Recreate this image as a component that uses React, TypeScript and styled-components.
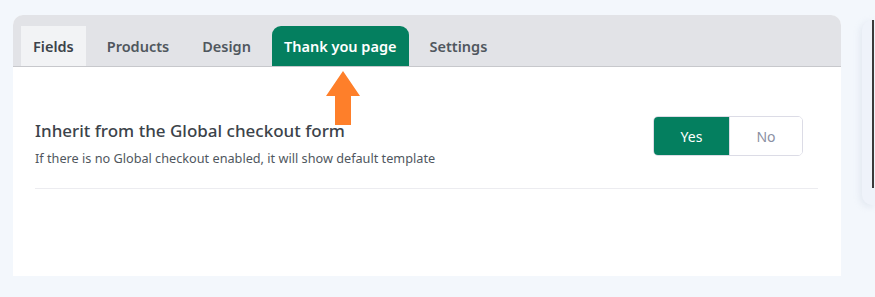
import React, { useState } from 'react';
import styled, { createGlobalStyle } from 'styled-components';

const GlobalStyle = createGlobalStyle`
  body {
    margin: 0;
    background: #f3f7fc;
    font-family: "Noto Sans", "Open Sans", Arial, sans-serif;
  }
`;

const Page = styled.div`
  display: flex;
  align-items: flex-start;
  height: 297px;
  overflow: hidden;
`;

const Card = styled.div`
  flex-shrink: 0;
  margin: 15px 0 0 13px;
  width: 828px;
  height: 261px;
  background: #ffffff;
  border-radius: 10px 10px 0 0;
  overflow: hidden;
`;

const TabBar = styled.div`
  display: flex;
  gap: 9px;
  padding: 11px 0 0 8px;
  background: #e2e3e7;
  border-bottom: 1px solid #c7c8cc;
`;

const Tab = styled.div<{ $active?: boolean; $current?: boolean }>`
  height: 40px;
  padding: 0 12px;
  display: flex;
  align-items: center;
  font-size: 14.5px;
  font-weight: 600;
  border-radius: ${p => (p.$active ? '9px 9px 0 0' : '0')};
  background: ${p => (p.$active ? '#047f5f' : p.$current ? '#f2f3f5' : 'transparent')};
  color: ${p => (p.$active ? '#ffffff' : p.$current ? '#3c434a' : '#50575e')};
  cursor: pointer;
`;

const Body = styled.div`
  position: relative;
  padding: 49px 23px 0 22px;
`;

const Arrow = styled.svg`
  position: absolute;
  left: 312px;
  top: 4px;
`;

const Row = styled.div`
  display: flex;
  justify-content: space-between;
  align-items: flex-start;
  padding-bottom: 21px;
  border-bottom: 1px solid #ececf0;
`;

const Label = styled.div`
  padding-top: 3px;
`;

const Title = styled.div`
  font-size: 17px;
  font-weight: 500;
  color: #3c434a;
  line-height: 24px;
`;

const Hint = styled.div`
  margin-top: 6px;
  font-size: 12.7px;
  color: #50575e;
  line-height: 18px;
`;

const Toggle = styled.div`
  display: flex;
  margin-right: 15px;
  border: 1px solid #dcdce6;
  border-radius: 5px;
  overflow: hidden;
`;

const ToggleBtn = styled.button<{ $on?: boolean }>`
  width: ${p => (p.$on ? '75px' : '73px')};
  height: 38px;
  border: none;
  font-family: inherit;
  font-size: 14px;
  background: ${p => (p.$on ? '#047f5f' : '#ffffff')};
  color: ${p => (p.$on ? '#ffffff' : '#8a8fa3')};
  border-left: ${p => (p.$on ? 'none' : '1px solid #dcdce6')};
  cursor: pointer;
`;

const SidePanel = styled.div`
  flex-shrink: 0;
  margin: 20px 0 0 21px;
  width: 13px;
  height: 185px;
  background: #eff3fa;
  border-radius: 10px 0 0 10px;
  box-shadow: -2px 2px 6px rgba(180, 190, 210, 0.25);
  display: flex;
  justify-content: flex-end;
`;

const SideEdge = styled.div`
  width: 2px;
  height: 168px;
  margin-right: 1px;
  background: #3a3a3a;
`;

const tabs = ['Fields', 'Products', 'Design', 'Thank you page', 'Settings'];

const App: React.FC = () => {
  const [inherit, setInherit] = useState<boolean>(true);

  return (
    <>
      <GlobalStyle />
      <Page>
        <Card>
          <TabBar>
            {tabs.map(t => (
              <Tab key={t} $active={t === 'Thank you page'} $current={t === 'Fields'}>
                {t}
              </Tab>
            ))}
          </TabBar>
          <Body>
            {/* 안내 화살표 */}
            <Arrow width="36" height="54" viewBox="0 0 36 54">
              <polygon points="18,0 35,25 26,25 26,54 10,54 10,25 1,25" fill="#fe7f2a" />
            </Arrow>
            <Row>
              <Label>
                <Title>Inherit from the Global checkout form</Title>
                <Hint>If there is no Global checkout enabled, it will show default template</Hint>
              </Label>
              <Toggle>
                <ToggleBtn $on={inherit} onClick={() => setInherit(true)}>Yes</ToggleBtn>
                <ToggleBtn $on={!inherit} onClick={() => setInherit(false)}>No</ToggleBtn>
              </Toggle>
            </Row>
          </Body>
        </Card>
        <SidePanel>
          <SideEdge />
        </SidePanel>
      </Page>
    </>
  );
};

export default App;
